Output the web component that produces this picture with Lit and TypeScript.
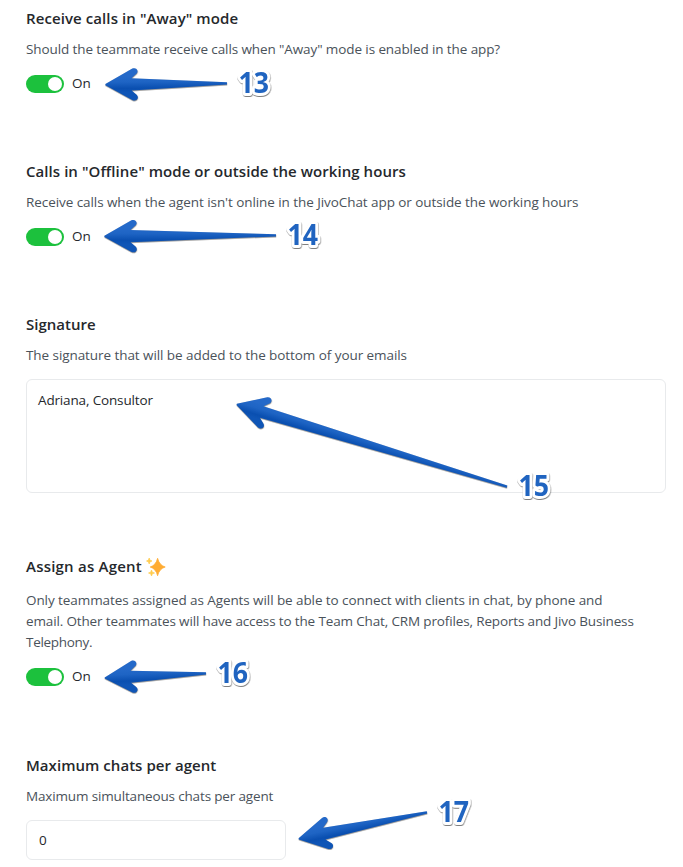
import { LitElement, html, css, svg, nothing } from "lit";
import { customElement, property } from "lit/decorators.js";

@customElement("toggle-row")
class ToggleRow extends LitElement {
  @property() label = "On";
  static styles = css`
    :host { display: flex; align-items: center; gap: 8px; height: 20px; }
    .track {
      box-sizing: border-box; width: 38px; height: 18px; padding: 2px;
      border-radius: 9px; background: #1cc13d; display: flex; justify-content: flex-end;
    }
    .knob { width: 14px; height: 14px; border-radius: 50%; background: #fff; }
    .label { font-size: 13.5px; line-height: 20px; padding-bottom: 2px; color: #25282c; }
  `;
  render() {
    return html`<div class="track"><div class="knob"></div></div><span class="label">${this.label}</span>`;
  }
}

interface Mark { n: string; tip: [number, number]; tail: [number, number]; text: [number, number]; }

const marks: Mark[] = [
  { n: "13", tip: [105, 84.7], tail: [227, 83.3], text: [238.5, 93] },
  { n: "14", tip: [104, 236.3], tail: [276, 235.3], text: [287.5, 245] },
  { n: "15", tip: [236.3, 404.3], tail: [507, 486.6], text: [518.5, 496] },
  { n: "16", tip: [104.3, 678], tail: [206, 673.3], text: [217.5, 683] },
  { n: "17", tip: [298.3, 839], tail: [427, 812.3], text: [438.5, 822] },
];

@customElement("app-root")
class AppRoot extends LitElement {
  static styles = css`
    :host {
      display: block; position: relative; box-sizing: border-box;
      width: 683px; height: 867px; padding: 6px 17px 0 26px; overflow: hidden;
      background: #fff; font-family: "Open Sans", "Noto Sans", sans-serif;
    }
    .title {
      display: flex; align-items: center; height: 24px; margin-bottom: 9px;
      font-size: 15px; line-height: 24px; font-weight: 600; color: #25282c; white-space: nowrap;
    }
    .desc { font-size: 13.5px; line-height: 20px; color: #4a525a; white-space: nowrap; }
    .para { line-height: 21px; margin-top: 12px; }
    .calls { margin-bottom: 65px; }
    .signature { margin-bottom: 61px; }
    .agent { margin-bottom: 66px; }
    .agent .title { margin-bottom: 0; }
    toggle-row { margin-top: 15px; }
    .agent toggle-row { margin-top: 14px; }
    .spark { width: 20px; height: 20px; margin: 2px 0 0 4px; }
    .field {
      box-sizing: border-box; border: 1px solid #e8eaec; border-radius: 6px;
      font-size: 13.5px; color: #25282c; line-height: 20px;
    }
    .area { height: 114px; margin-top: 14px; padding: 10px 11px; }
    .input { width: 260px; height: 40px; margin-top: 14px; padding: 9px 12px; }
    .marks { position: absolute; inset: 0; width: 683px; height: 867px; pointer-events: none; }
    .num {
      font: 700 29px "Open Sans", "Noto Sans", sans-serif; fill: #2064c0;
      stroke: #fff; stroke-width: 6px; stroke-linejoin: round; paint-order: stroke;
    }
  `;

  private arrow(m: Mark) {
    const dx = m.tail[0] - m.tip[0];
    const dy = m.tail[1] - m.tip[1];
    const len = Math.hypot(dx, dy);
    const ang = (Math.atan2(dy, dx) * 180) / Math.PI;
    return svg`
      <g filter="url(#arrowShadow)">
        <path transform="translate(${m.tip[0]} ${m.tip[1]}) rotate(${ang})" fill="url(#blue)"
          d="M0.4 -0.6 L27.5 -15.8 C31.5 -17.6 34.5 -13.3 31.5 -10.5 L26.5 -6.1 L${len} -1.1 L${len} 1.1 L26.5 6.1 L31.5 10.5 C34.5 13.3 31.5 17.6 27.5 15.8 L0.4 0.6 Z"/>
      </g>
      <text class="num" filter="url(#numShadow)" x=${m.text[0]} y=${m.text[1]} textLength="30.5" lengthAdjust="spacingAndGlyphs">${m.n}</text>`;
  }

  private title(text: string, spacing: number, icon: unknown = nothing) {
    return html`<div class="title"><span style="letter-spacing:${spacing}px">${text}</span>${icon}</div>`;
  }

  private line(text: string, spacing: number) {
    return html`<div style="letter-spacing:${spacing}px">${text}</div>`;
  }

  render() {
    const spark = html`<svg class="spark" viewBox="0 0 20 20">
      <path fill="#ffac33" stroke="#ffac33" stroke-width="0.8" stroke-linejoin="round" d="M11.6 1.3 Q13.3 8.3 19.2 10 Q13.3 11.7 11.6 18.7 Q9.9 11.7 4.2 10 Q9.9 8.3 11.6 1.3Z"/>
      <path fill="#ffcb4c" stroke="#ffcb4c" stroke-width="0.7" stroke-linejoin="round" d="M3.2 1 L4 3.2 L6 4 L4 4.8 L3.2 7 L2.4 4.8 L0.5 4 L2.4 3.2Z M5.5 13 L6.3 15.2 L8.5 16 L6.3 16.8 L5.5 19 L4.7 16.8 L2.5 16 L4.7 15.2Z"/>
    </svg>`;
    return html`
      <section class="calls">
        ${this.title('Receive calls in "Away" mode', 0.09)}
        <div class="desc">${this.line('Should the teammate receive calls when "Away" mode is enabled in the app?', -0.1)}</div>
        <toggle-row></toggle-row>
      </section>
      <section class="calls">
        ${this.title('Calls in "Offline" mode or outside the working hours', 0.06)}
        <div class="desc">${this.line("Receive calls when the agent isn't online in the JivoChat app or outside the working hours", -0.07)}</div>
        <toggle-row></toggle-row>
      </section>
      <section class="signature">
        ${this.title("Signature", 0)}
        <div class="desc">${this.line("The signature that will be added to the bottom of your emails", -0.07)}</div>
        <div class="field area">${this.line("Adriana, Consultor", -0.15)}</div>
      </section>
      <section class="agent">
        ${this.title("Assign as Agent", 0.22, spark)}
        <div class="desc para">
          ${this.line("Only teammates assigned as Agents will be able to connect with clients in chat, by phone and", -0.08)}
          ${this.line("email. Other teammates will have access to the Team Chat, CRM profiles, Reports and Jivo Business", -0.144)}
          ${this.line("Telephony.", -0.3)}
        </div>
        <toggle-row></toggle-row>
      </section>
      <section>
        ${this.title("Maximum chats per agent", 0.04)}
        <div class="desc">${this.line("Maximum simultaneous chats per agent", -0.155)}</div>
        <div class="field input">0</div>
      </section>
      <svg class="marks" viewBox="0 0 683 867">
        <defs>
          <linearGradient id="blue" gradientUnits="userSpaceOnUse" x1="0" y1="-8" x2="0" y2="8">
            <stop offset="0" stop-color="#2469c9"/>
            <stop offset="0.35" stop-color="#1e64c4"/>
            <stop offset="0.75" stop-color="#0a4fb0"/>
            <stop offset="1" stop-color="#0f55b6"/>
          </linearGradient>
          <filter id="arrowShadow" x="-10%" y="-20%" width="120%" height="150%" color-interpolation-filters="sRGB">
            <feDropShadow dx="0.2" dy="0.7" stdDeviation="0.6" flood-color="#000" flood-opacity="0.5"/>
          </filter>
          <filter id="numShadow" x="-20%" y="-20%" width="150%" height="150%" color-interpolation-filters="sRGB">
            <feDropShadow dx="0.4" dy="1" stdDeviation="0.5" flood-color="#000" flood-opacity="0.5"/>
          </filter>
        </defs>
        ${marks.map((m) => this.arrow(m))}
      </svg>
    `;
  }
}
